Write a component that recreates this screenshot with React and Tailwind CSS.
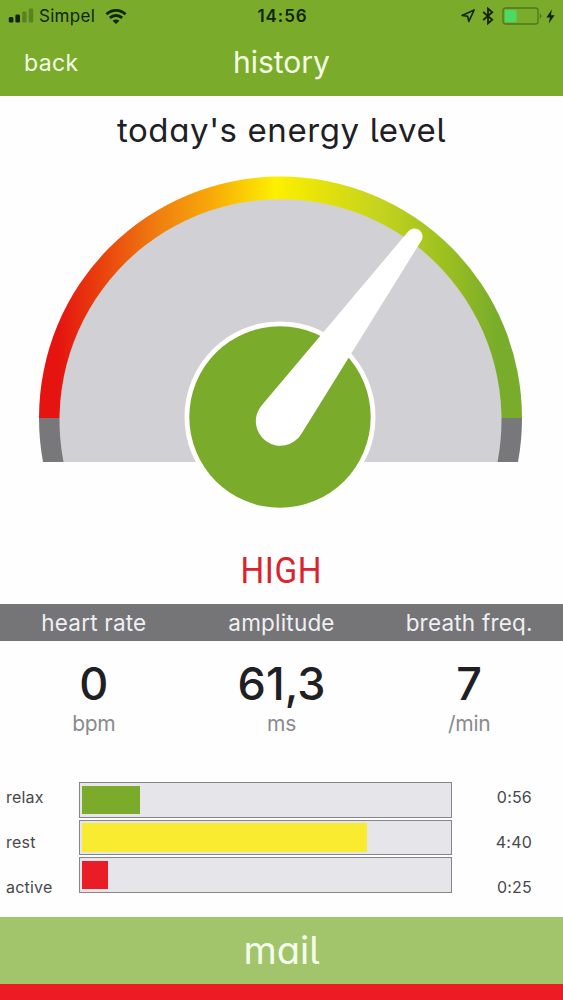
import React from 'react';

const stats = [
  { label: 'heart rate', value: '0', unit: 'bpm' },
  { label: 'amplitude', value: '61,3', unit: 'ms' },
  { label: 'breath freq.', value: '7', unit: '/min' },
];

const levels = [
  { label: 'relax', time: '0:56', width: 57.5, color: 'bg-[#7aab2b]' },
  { label: 'rest', time: '4:40', width: 285, color: 'bg-[#f9eb2f]' },
  { label: 'active', time: '0:25', width: 25.5, color: 'bg-[#ea1c26]' },
];

const StatusBar = () => (
  <div className="grid h-8 grid-cols-3 items-center pl-2 pr-1.5 text-[#10250a]">
    <div className="flex items-center">
      <svg width="28" height="16" viewBox="0 0 28 16" fill="currentColor">
        <rect x="0.8" y="9" width="4.6" height="5.6" rx="1.4" />
        <rect x="7.4" y="6.6" width="4.6" height="8" rx="1.4" />
        <rect x="14.2" y="3.4" width="4.4" height="11.2" rx="1.4" opacity="0.3" />
        <rect x="20.8" y="0.6" width="4.4" height="14" rx="1.4" opacity="0.3" />
      </svg>
      <span className="ml-[3px] text-[17px] leading-5 tracking-[0.3px]">Simpel</span>
      <svg className="ml-2.5" width="22" height="17" viewBox="0 0 22 17" fill="none" stroke="currentColor" strokeWidth="2.8">
        <path d="M1.4 6.2C6.9 1 15.1 1 20.6 6.2" />
        <path d="M4.9 9.9C8.4 6.7 13.6 6.7 17.1 9.9" />
        <path d="M7.6 12.7C9.6 11 12.4 11 14.4 12.7L11 16Z" fill="currentColor" stroke="none" />
      </svg>
    </div>
    <span className="text-center text-[17px] leading-5 font-semibold tracking-[0.9px]">14:56</span>
    <div className="flex items-center justify-end">
      <svg width="16" height="16" viewBox="0 0 16 16" fill="none" stroke="currentColor" strokeWidth="1.6" strokeLinejoin="round">
        <path d="M14.2 2L2 7.4L7.6 8.2L8.8 13.4Z" />
      </svg>
      <svg className="ml-1.5" width="12" height="18" viewBox="0 0 12 18" fill="none" stroke="currentColor" strokeWidth="1.8">
        <path d="M1.2 5L10.2 12.8L6 16.4V1.6L10.2 5.2L1.2 13" />
      </svg>
      <svg className="ml-2" width="41" height="18" viewBox="0 0 41 18">
        <rect x="1" y="1" width="35" height="16" rx="2.6" fill="none" stroke="#4a7a1c" strokeWidth="1.3" />
        <rect x="3" y="3" width="11.6" height="12" rx="1" fill="#4cd964" />
        <path d="M37.8 6.6C40 7.4 40 10.6 37.8 11.4Z" fill="#4a7a1c" />
      </svg>
      <svg className="mr-0.5 ml-[3px]" width="9" height="15" viewBox="0 0 9 15" fill="currentColor">
        <path d="M5.8 0.6L0.4 8.4H3.9L2.8 14.4L8.6 6.3H5Z" />
      </svg>
    </div>
  </div>
);

const Gauge = () => (
  <svg className="block w-full" height="350" viewBox="0 170 563 350">
    <defs>
      <linearGradient id="arc" gradientUnits="userSpaceOnUse" x1="39" y1="0" x2="522" y2="0">
        <stop offset="0.04" stopColor="#e51410" />
        <stop offset="0.13" stopColor="#e9420d" />
        <stop offset="0.25" stopColor="#f08010" />
        <stop offset="0.36" stopColor="#f8ab08" />
        <stop offset="0.49" stopColor="#fdf000" />
        <stop offset="0.58" stopColor="#e6e20a" />
        <stop offset="0.7" stopColor="#c6d41e" />
        <stop offset="0.84" stopColor="#9dc020" />
        <stop offset="0.95" stopColor="#78ac2a" />
      </linearGradient>
    </defs>
    {/* dial */}
    <path d="M39 418A241.5 241.5 0 0 1 522 418Z" fill="url(#arc)" />
    <path d="M39 418H522A241.5 241.5 0 0 1 518 462H43A241.5 241.5 0 0 1 39 418Z" fill="#78787b" />
    <path d="M63.5 462A221 221 0 1 1 497.5 462Z" fill="#d1d1d5" />
    {/* hub */}
    <circle cx="280" cy="417" r="95.5" fill="white" />
    <circle cx="280" cy="417" r="90.7" fill="#7aab2b" />
    {/* needle */}
    <path d="M261.8 405.2L408.4 231.3A8 8 0 0 1 421.3 240.7L301.3 433.9A24.5 24.5 0 1 1 261.8 405.2Z" fill="white" />
  </svg>
);

const App = () => {
  return (
    <div className="flex h-[1000px] w-[563px] flex-col overflow-hidden bg-[#fefefe] font-['Inter',sans-serif] text-[#202024]">
      <header className="h-24 bg-[#7aab2b]">
        <StatusBar />
        <div className="grid h-[62px] grid-cols-3 items-center text-[#f4ffe6]">
          <span className="pl-6 text-[23px] leading-7 tracking-[0.4px]">back</span>
          <h1 className="-mt-0.5 text-center text-[30px] leading-8 [font-feature-settings:'cv11','cv05']">history</h1>
        </div>
      </header>

      <h2 className="mt-3.5 h-10 text-center text-[33px] leading-10 tracking-[0.6px] whitespace-nowrap [font-feature-settings:'cv11','cv05']">
        today's energy level
      </h2>

      <div className="mt-5">
        <Gauge />
      </div>

      <div className="mt-[31px] h-10 text-center font-['Roboto',sans-serif] text-[37px] leading-10 text-[#d9232e]">
        <span className="inline-block scale-x-90 tracking-[0.6px]">HIGH</span>
      </div>

      <div className="mt-[13px] grid h-[37px] grid-cols-3 items-center bg-[#757578] text-center text-[22.5px] leading-8 tracking-[0.2px] text-[#f0f0f2]">
        {stats.map((s) => (
          <span key={s.label}>{s.label}</span>
        ))}
      </div>

      <div className="mt-4 grid grid-cols-3 text-center">
        {stats.map((s) => (
          <div key={s.label}>
            <div className="h-[53px] text-[45px] leading-[53px] font-[460]">{s.value}</div>
            <div className="h-7 text-[21px] leading-7 tracking-[-0.3px] text-[#8a8a8e]">{s.unit}</div>
          </div>
        ))}
      </div>

      <div className="mt-11 flex h-[111px] text-[16px] leading-5 tracking-[0.2px] text-[#48484b]">
        <div className="flex w-[79px] flex-col gap-[25px] pt-[5px] pl-1.5">
          {levels.map((l) => <span key={l.label}>{l.label}</span>)}
        </div>
        <div className="flex w-[373px] flex-col gap-0.5">
          {levels.map((l) => (
            <div key={l.label} className="h-[35.5px] border-[1.5px] border-[#85858a] bg-[#e6e5e9] px-0.5 py-[2.5px]">
              <div className={`h-full ${l.color}`} style={{ width: l.width }} />
            </div>
          ))}
        </div>
        <div className="flex flex-1 flex-col gap-[25px] pt-[5px] pr-[31px] text-right">
          {levels.map((l) => <span key={l.label}>{l.time}</span>)}
        </div>
      </div>

      <button className="mt-auto h-[67px] shrink-0 bg-[#a2c56b] text-center text-[38px] leading-[67px] text-[#f4ffee] [font-feature-settings:'cv11','cv05']">
        mail
      </button>
      <div className="h-4 shrink-0 bg-[#ec1b24]" />
    </div>
  );
};

export default App;
